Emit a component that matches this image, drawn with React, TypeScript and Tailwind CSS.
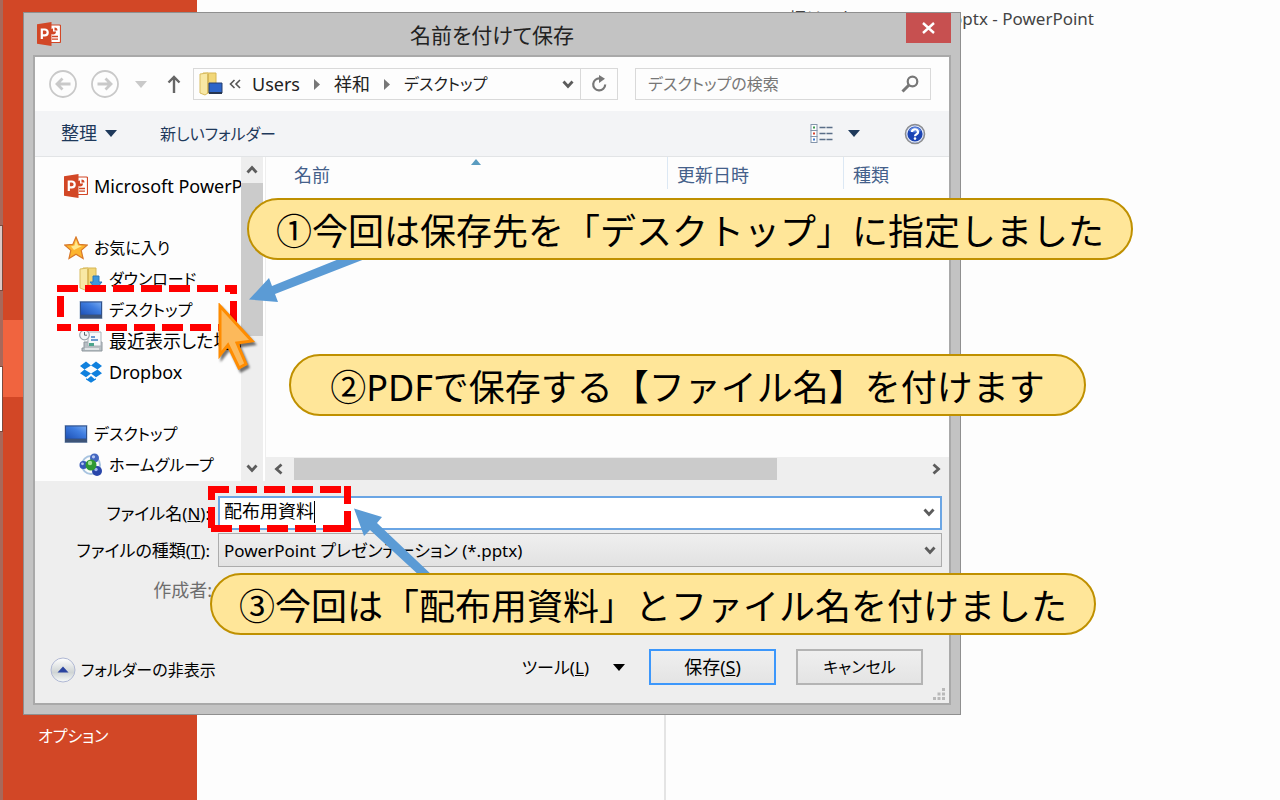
import type { ReactNode } from 'react';

const PowerPointIcon = () => (
  <svg width="24" height="24" viewBox="0 0 24 24" className="shrink-0" aria-hidden="true">
    <rect x="12" y="3" width="11.5" height="17.5" rx="1" fill="#fff" stroke="#d24726" strokeWidth="1.2" />
    <path d="M16 6.5a3 3 0 1 0 3 3h-3z M17.5 5.5v3h3a3 3 0 0 0-3-3z" fill="#d24726" />
    <path d="M15 14.5h6M15 17.2h6" stroke="#d24726" strokeWidth="1.3" />
    <path d="M0 2.2 14.5 0v24L0 21.8z" fill="#d24726" />
    <path d="M4.8 17V7.5h3a2.8 2.8 0 0 1 0 5.8h-3" fill="none" stroke="#fff" strokeWidth="2.2" />
  </svg>
);

const MonitorIcon = () => (
  <svg width="24" height="20" viewBox="0 0 24 20" className="shrink-0" aria-hidden="true">
    <defs>
      <linearGradient id="screen" x1="0" y1="1" x2="1" y2="0">
        <stop offset="0" stopColor="#1d50b4" />
        <stop offset="0.6" stopColor="#3f7de0" />
        <stop offset="1" stopColor="#78abf0" />
      </linearGradient>
    </defs>
    <rect x="0.5" y="1" width="23" height="18" fill="#a9bdd6" />
    <rect x="1.5" y="2" width="21" height="13" fill="url(#screen)" stroke="#30518c" />
    <rect x="1" y="15" width="22" height="3.5" fill="#3d5478" />
  </svg>
);

const FolderIcon = ({ children }: { children: ReactNode }) => (
  <svg width="24" height="24" viewBox="0 0 24 24" className="shrink-0" aria-hidden="true">
    <path d="M4 1h13v20H4z" fill="#f2d778" stroke="#d6b654" />
    <path d="M1 2l8-1v20l-3 2-5-2z" fill="#f8e8a4" stroke="#d9bc60" />
    <path d="M9 2v19" stroke="#c9a743" />
    {children}
  </svg>
);

const StarIcon = () => (
  <svg width="24" height="24" viewBox="0 0 24 24" className="shrink-0" aria-hidden="true">
    <path d="M12 1l3.2 7.4 8 .7-6 5.3 1.9 8.1L12 18.2l-7 4.3 1.8-8.1-6-5.3 8-.7z" fill="#fdb52f" stroke="#d8792a" strokeWidth="1.2" />
    <path d="M12 4l2 5.5 4 .5-8 4-3-3.5 3.5-1z" fill="#ffe88c" />
  </svg>
);

const RecentIcon = () => (
  <svg width="24" height="24" viewBox="0 0 24 24" className="shrink-0" aria-hidden="true">
    <path d="M5 13h18v9H3v-3h2z" fill="#b8bfc4" stroke="#8d969c" />
    <path d="M9 3h13v14H9z" fill="#f7f9fb" stroke="#a9b1b8" />
    <path d="M12 8h4M12 11h7" stroke="#6c9bd0" strokeWidth="2" />
    <rect x="10" y="14" width="5" height="3" fill="#4ba58c" />
    <path d="M6 20h14" stroke="#eef1f3" strokeWidth="1.5" />
    <circle cx="5.5" cy="6" r="4.8" fill="#f2f5f7" stroke="#9aa3aa" strokeWidth="1.2" />
    <path d="M5.5 3v3.2H8" fill="none" stroke="#5d676f" />
  </svg>
);

const DropboxIcon = () => (
  <svg width="24" height="22" viewBox="0 0 24 22" className="shrink-0" aria-hidden="true" fill="#1081de">
    <path d="M7 0.5 12 4.5 5.5 8.5 1 5zM17 0.5 12 4.5l6.5 4L23 5zM1 12.2l4.5-3.7L12 12.5l-5 3.7zM23 12.2l-4.5-3.7-6.5 4 5 3.7z" />
    <path d="M7 17.2l1.5.8L12 15l3.5 3 1.5-.8v1.3l-5 3.2-5-3.2z" />
  </svg>
);

const HomegroupIcon = () => (
  <svg width="24" height="24" viewBox="0 0 24 24" className="shrink-0" aria-hidden="true">
    <circle cx="12" cy="12" r="9" fill="none" stroke="#a8c4e0" strokeWidth="2" />
    <circle cx="15.5" cy="5" r="4.5" fill="#4467c0" />
    <circle cx="14.5" cy="3.8" r="1.6" fill="#b5c8f2" />
    <circle cx="4.5" cy="12" r="4" fill="#3558b8" />
    <circle cx="3.5" cy="10.8" r="1.4" fill="#b5c8f2" />
    <circle cx="18" cy="18" r="5" fill="#2946aa" />
    <circle cx="17" cy="16.5" r="1.7" fill="#9fb6ee" />
    <circle cx="12" cy="12" r="5.5" fill="#2f9a33" />
    <circle cx="11" cy="10" r="2.2" fill="#a5e39a" />
  </svg>
);

const Chevron = ({ className }: { className?: string }) => (
  <svg width="14" height="14" viewBox="0 0 14 14" className={`shrink-0 ${className ?? ''}`} aria-hidden="true">
    <path d="M2.5 4.5 7 9.5l4.5-5" fill="none" stroke="#5c5c5c" strokeWidth="2.8" />
  </svg>
);

const Caret = () => (
  <svg width="12" height="7" viewBox="0 0 12 7" className="shrink-0" fill="currentColor" aria-hidden="true">
    <path d="M0 0h12L6 7z" />
  </svg>
);

const Crumb = () => (
  <svg width="6" height="11" viewBox="0 0 6 11" fill="#777" className="mx-[14px] shrink-0" aria-hidden="true">
    <path d="M0 0l6 5.5L0 11z" />
  </svg>
);

const RoundArrow = ({ flip }: { flip?: boolean }) => (
  <svg width="28" height="28" viewBox="0 0 28 28" className={flip ? 'rotate-180' : ''} aria-hidden="true">
    <circle cx="14" cy="14" r="13" fill="none" stroke="#c9c9c9" strokeWidth="1.8" />
    <path d="M21.5 14H8M13.5 8.5 8 14l5.5 5.5" fill="none" stroke="#c9c9c9" strokeWidth="2.8" />
  </svg>
);

const NavItem = ({ icon, label, nested, kana }: { icon: ReactNode; label: string; nested?: boolean; kana?: boolean }) => (
  <li>
    <a
      href="#"
      className={`flex h-[31px] items-center gap-[6px] whitespace-nowrap ${nested ? 'pl-[44px]' : 'pl-[29px]'} ${kana ? 'text-base' : 'text-lg'}`}
    >
      {icon}
      {label}
    </a>
  </li>
);

const DashedFrame = ({ className }: { className: string }) => (
  <svg className={`pointer-events-none absolute ${className}`} aria-hidden="true">
    <rect width="100%" height="100%" fill="none" stroke="#ff0000" strokeWidth="14" strokeDasharray="21 7" />
  </svg>
);

const Callout = ({ className, children }: { className: string; children: ReactNode }) => (
  <p className={`absolute flex h-[62px] items-center justify-center whitespace-nowrap rounded-full border-2 border-[#bf9000] bg-[#ffe699] pt-[6px] text-4xl text-black [font-feature-settings:normal] ${className}`}>
    {children}
  </p>
);

const TitleBar = () => (
  <header className="flex h-[42px] items-start">
    <div className="flex w-[45px] pl-[4px] pt-[9px]">
      <PowerPointIcon />
    </div>
    <h1 className="flex-1 pt-[7px] text-center text-[21px] leading-[30px] text-[#222]">名前を付けて保存</h1>
    <button aria-label="閉じる" className="flex h-[30px] w-[45px] items-center justify-center bg-[#c75050]">
      <svg width="13" height="12" viewBox="0 0 13 12" aria-hidden="true">
        <path d="M1 1l11 10M12 1L1 11" stroke="#fff" strokeWidth="2.4" />
      </svg>
    </button>
  </header>
);

const AddressRow = () => (
  <div className="flex h-[54px] items-center pl-[14px] pr-[18px]">
    <button aria-label="戻る"><RoundArrow /></button>
    <button aria-label="進む" className="ml-[14px]"><RoundArrow flip /></button>
    <button aria-label="履歴" className="ml-[16px] text-[#c9c9c9]"><Caret /></button>
    <button aria-label="上へ" className="ml-[20px]">
      <svg width="14" height="18" viewBox="0 0 14 18" aria-hidden="true">
        <path d="M7 18V2M1.5 7.5 7 2l5.5 5.5" fill="none" stroke="#666" strokeWidth="2.4" />
      </svg>
    </button>
    <div className="ml-[12px] flex h-[32px] flex-1 items-center border border-[#d9d9d9] pl-[5px] text-[#222]">
      <FolderIcon>
        <path d="M10 11h13v10H10z" fill="#2d65c8" stroke="#28406e" />
        <path d="M10 20h13v2H10z" fill="#26354f" />
      </FolderIcon>
      <svg width="12" height="10" viewBox="0 0 12 10" className="ml-[6px]" aria-hidden="true">
        <path d="M5.5 1 1.5 5l4 4M11 1 7 5l4 4" fill="none" stroke="#555" strokeWidth="1.6" />
      </svg>
      <span className="ml-[11px]">Users</span>
      <Crumb />
      <span>祥和</span>
      <Crumb />
      <span className="text-base">デスクトップ</span>
      <button aria-label="以前の場所" className="ml-auto flex h-full items-center border-r border-[#d9d9d9] pr-[5px]">
        <Chevron />
      </button>
      <button aria-label="更新" className="flex h-full w-[36px] items-center justify-center">
        <svg width="18" height="18" viewBox="0 0 18 18" aria-hidden="true">
          <path d="M10 3.5a6 6 0 1 0 5.2 6" fill="none" stroke="#777" strokeWidth="2.2" />
          <path d="M9 0l6 3.8L9 8z" fill="#777" />
        </svg>
      </button>
    </div>
    <label className="ml-[17px] flex h-[32px] w-[296px] items-center border border-[#d9d9d9] pl-[12px] pr-[11px]">
      <input aria-label="デスクトップの検索" placeholder="デスクトップの検索" className="min-w-0 flex-1 text-base outline-none placeholder:text-[#777]" />
      <svg width="18" height="18" viewBox="0 0 18 18" fill="none" stroke="#777" aria-hidden="true">
        <circle cx="11.5" cy="6.5" r="4.8" strokeWidth="2.2" />
        <path d="M8 10l-6.5 6.5" strokeWidth="3" />
      </svg>
    </label>
  </div>
);

const Toolbar = () => (
  <div className="flex h-[46px] items-center border-b border-[#e2e4e6] bg-[#f3f4f6] pl-[26px] pr-[23px] text-[#1e395b]">
    <button className="flex items-center gap-[8px]">整理<Caret /></button>
    <button className="ml-[43px] text-base">新しいフォルダー</button>
    <button aria-label="表示方法" className="ml-auto flex items-center gap-[15px]">
      <svg width="23" height="20" viewBox="0 0 23 20" aria-hidden="true">
        <g fill="#fff" stroke="#8495ab">
          <rect x="1" y="0.5" width="6" height="6" />
          <rect x="1" y="6.5" width="6" height="6" />
          <rect x="1" y="12.5" width="6" height="6" />
        </g>
        <path d="M3 3.5h2" stroke="#3c9a4e" strokeWidth="2" />
        <path d="M3 9.5h2" stroke="#d8442f" strokeWidth="2" />
        <path d="M3 15.5h2" stroke="#3a78d0" strokeWidth="2" />
        <path d="M9.5 3.5h13M9.5 9.5h13M9.5 15.5h13" stroke="#5a6e88" strokeWidth="1.6" strokeDasharray="6 1" />
      </svg>
      <Caret />
    </button>
    <button aria-label="ヘルプ" className="ml-[44px]">
      <svg width="22" height="22" viewBox="0 0 22 22" aria-hidden="true">
        <circle cx="11" cy="11" r="9.5" fill="#1b44b4" stroke="#8e8e8e" strokeWidth="1.6" />
        <circle cx="11" cy="11" r="8.2" fill="none" stroke="#e8ecf4" strokeWidth="1.2" />
        <path d="M5 8a6.5 6.5 0 0 1 12 0q-6 3-12 0z" fill="#5d86e0" />
        <path d="M8 9a3 2.7 0 1 1 4.5 2.3q-1.5.8-1.5 2" fill="none" stroke="#fff" strokeWidth="2.2" />
        <circle cx="11" cy="15.6" r="1.3" fill="#fff" />
      </svg>
    </button>
  </div>
);

const Browser = () => (
  <div className="flex h-[324px]">
    <nav className="w-[206px] shrink-0 overflow-hidden pt-[13px] text-black">
      <ul>
        <NavItem icon={<PowerPointIcon />} label="Microsoft PowerPoint" />
      </ul>
      <ul className="mt-[31px]">
        <NavItem kana icon={<StarIcon />} label="お気に入り" />
        <NavItem
          nested
          kana
          icon={
            <FolderIcon>
              <path d="M14 9h6v6h3l-6 7-6-7h3z" fill="#3c97dc" stroke="#2c78b8" />
            </FolderIcon>
          }
          label="ダウンロード"
        />
        <NavItem nested kana icon={<MonitorIcon />} label="デスクトップ" />
        <NavItem nested icon={<RecentIcon />} label="最近表示した場所" />
        <NavItem nested icon={<DropboxIcon />} label="Dropbox" />
      </ul>
      <ul className="mt-[31px]">
        <NavItem kana icon={<MonitorIcon />} label="デスクトップ" />
        <NavItem nested kana icon={<HomegroupIcon />} label="ホームグループ" />
      </ul>
    </nav>
    <div className="flex w-[24px] shrink-0 flex-col items-center justify-between border-r-2 border-white bg-[#eee]">
      <Chevron className="my-[6px] rotate-180" />
      <div className="w-full flex-1 bg-[#cbcbcb]" />
      <div className="h-[119px]" />
      <Chevron className="my-[6px]" />
    </div>
    <div className="flex min-w-0 flex-1 flex-col border-l border-[#eee]">
      <div className="relative flex h-[32px] text-[#44608a]">
        <span className="flex-1 pl-[28px] pt-[5px]">名前</span>
        <span className="w-[176px] border-l border-[#dce8f4] pl-[9px] pt-[5px]">更新日時</span>
        <span className="w-[106px] border-l border-[#dce8f4] pl-[9px] pt-[5px]">種類</span>
        <svg width="10" height="6" viewBox="0 0 10 6" className="absolute left-[205px] top-[2px]" aria-hidden="true">
          <path d="M0 6l5-6 5 6z" fill="#5a9cc0" />
        </svg>
      </div>
      <div className="flex-1" />
      <div className="flex h-[24px] items-center bg-[#eee] px-[6px]">
        <Chevron className="rotate-90" />
        <div className="ml-[8px] h-[22px] w-[72%] bg-[#cbcbcb]" />
        <Chevron className="ml-auto -rotate-90" />
      </div>
    </div>
  </div>
);

const FileForm = () => (
  <div className="relative bg-[#eee] pb-[18px] pr-[7px] pt-[15px]">
    <div className="flex items-center">
      <label htmlFor="file-name" className="w-[183px] pr-[8px] text-right text-[17px] text-black">ファイル名(<u>N</u>):</label>
      <div className="relative flex h-[34px] flex-1 items-center border-2 border-[#6aa5e4] bg-white px-[4px] pb-[3px]">
        <input id="file-name" defaultValue="配布用資料" className="min-w-0 flex-1 text-black outline-none" />
        <span className="absolute left-[94px] top-[3px] h-[22px] w-px bg-black" />
        <Chevron />
      </div>
    </div>
    <div className="mt-[3px] flex items-center">
      <label htmlFor="file-type" className="w-[183px] pr-[8px] text-right text-[17px] text-black">ファイルの種類(<u>T</u>):</label>
      <div className="relative flex-1">
        <select id="file-type" className="block h-[34px] w-full appearance-none border border-[#acacac] bg-linear-to-b from-[#efefef] to-[#e2e2e2] pl-[5px] text-[17px] text-black">
          <option>PowerPoint プレゼンテーション (*.pptx)</option>
        </select>
        <Chevron className="pointer-events-none absolute right-[5px] top-[10px]" />
      </div>
    </div>
    <p className="mt-[10px] w-[183px] pr-[6px] text-right text-[#6d6d6d]">作成者:</p>
    <div className="mt-[45px] flex items-center pr-[19px] text-black">
      <button className="ml-[15px] mt-[6px] flex items-center gap-[5px] text-base">
        <svg width="26" height="26" viewBox="0 0 26 26" aria-hidden="true">
          <defs>
            <linearGradient id="knob" x1="0" y1="0" x2="0" y2="1">
              <stop offset="0" stopColor="#fff" />
              <stop offset="0.6" stopColor="#cfd4d4" />
              <stop offset="1" stopColor="#f8fbfa" />
            </linearGradient>
          </defs>
          <circle cx="13" cy="13" r="12" fill="url(#knob)" stroke="#b0b8d4" />
          <path d="M7.5 15.5h11L13 9.500z" fill="#2a44a0" />
        </svg>
        フォルダーの非表示
      </button>
      <button className="ml-auto flex items-center gap-[24px] text-[17px]">
        <span>ツール(<u>L</u>)</span>
        <Caret />
      </button>
      <button className="ml-[24px] h-[36px] w-[127px] border-2 border-[#3c97fb] bg-linear-to-b from-[#efefef] to-[#e4e4e4] leading-[30px]">
        保存(<u>S</u>)
      </button>
      <button className="ml-[20px] h-[36px] w-[127px] border-2 border-[#b4b4b4] bg-linear-to-b from-[#efefef] to-[#e4e4e4] text-base">
        キャンセル
      </button>
    </div>
    <svg width="12" height="12" viewBox="0 0 12 12" fill="#b9b9b9" className="absolute bottom-[3px] right-[4px]" aria-hidden="true">
      <path d="M9 0h3v3H9zM9 4.500h3v3H9zM4.500 4.500h3v3h-3zM9 9h3v3H9zM4.500 9h3v3h-3zM0 9h3v3H0z" />
    </svg>
  </div>
);

const Backstage = () => (
  <div className="flex min-h-screen bg-[#fdfdfd]">
    <div className="w-[3px] shrink-0 bg-[#a8685a] pt-[225px]">
      <div className="h-[66px] border-y border-r border-[#7a4a3e] bg-[#dcc8c4]" />
      <div className="mt-[75px] h-[66px] border-y border-r border-[#7a4a3e] bg-white" />
    </div>
    <aside className="w-[194px] shrink-0 bg-[#d24726] pt-[320px]">
      <div className="h-[77px] bg-[#f0643f]" />
      <a href="#" className="mt-[326px] block pl-[35px] text-base leading-[27px] text-white">オプション</a>
    </aside>
    <main className="flex flex-1 flex-col">
      <p className="pr-[186px] pt-[5px] text-right text-[17px] text-[#444]">招はてなPowerPoint.pptx - PowerPoint</p>
      <div className="flex flex-1">
        <div className="w-[469px] border-r-2 border-[#e4e4e4]" />
      </div>
    </main>
  </div>
);

export default function App() {
  return (
    <div className="relative min-h-screen overflow-hidden font-['Noto_Sans','Noto_Sans_CJK_JP',sans-serif] text-lg leading-[27px] [font-feature-settings:'palt']">
      <Backstage />

      <section className="absolute left-[23px] right-[319px] top-[12px] border border-[#8f8f8f] bg-[#c3c3c3] px-[9px] pb-[9px]">
        <TitleBar />
        <div className="border-2 border-[#a9a9a9] bg-[#fdfdfd]">
          <AddressRow />
          <Toolbar />
          <Browser />
          <FileForm />
        </div>
      </section>

      <svg width="500" height="600" className="pointer-events-none absolute left-0 top-0" fill="#5b9bd5" aria-hidden="true">
        <path d="M249 299.500 269 278l3 8 72-29h26l-95 37 3 8z" />
        <path d="M354 508.500 382 517l-5 6 57 54h-13l-51-47-6 6z" />
      </svg>

      <DashedFrame className="left-[57px] top-[285px] h-[46px] w-[180px]" />
      <DashedFrame className="left-[208px] top-[486px] h-[46px] w-[143px]" />

      <Callout className="left-[247px] top-[198px] w-[886px]">①今回は保存先を「デスクトップ」に指定しました</Callout>
      <Callout className="left-[289px] top-[354px] w-[797px]">②PDFで保存する【ファイル名】を付けます</Callout>
      <Callout className="left-[210px] top-[573px] w-[886px]">③今回は「配布用資料」とファイル名を付けました</Callout>

      <svg width="44" height="70" viewBox="0 0 44 70" className="pointer-events-none absolute left-[215px] top-[303px] drop-shadow-[2px_3px_1px_#00000088]" aria-hidden="true">
        <path d="M5 3 37 38l-15 2 9 21-7 4-11-23-8 10z" fill="#fcb95b" stroke="#ff8c00" strokeWidth="3" />
      </svg>
    </div>
  );
}
